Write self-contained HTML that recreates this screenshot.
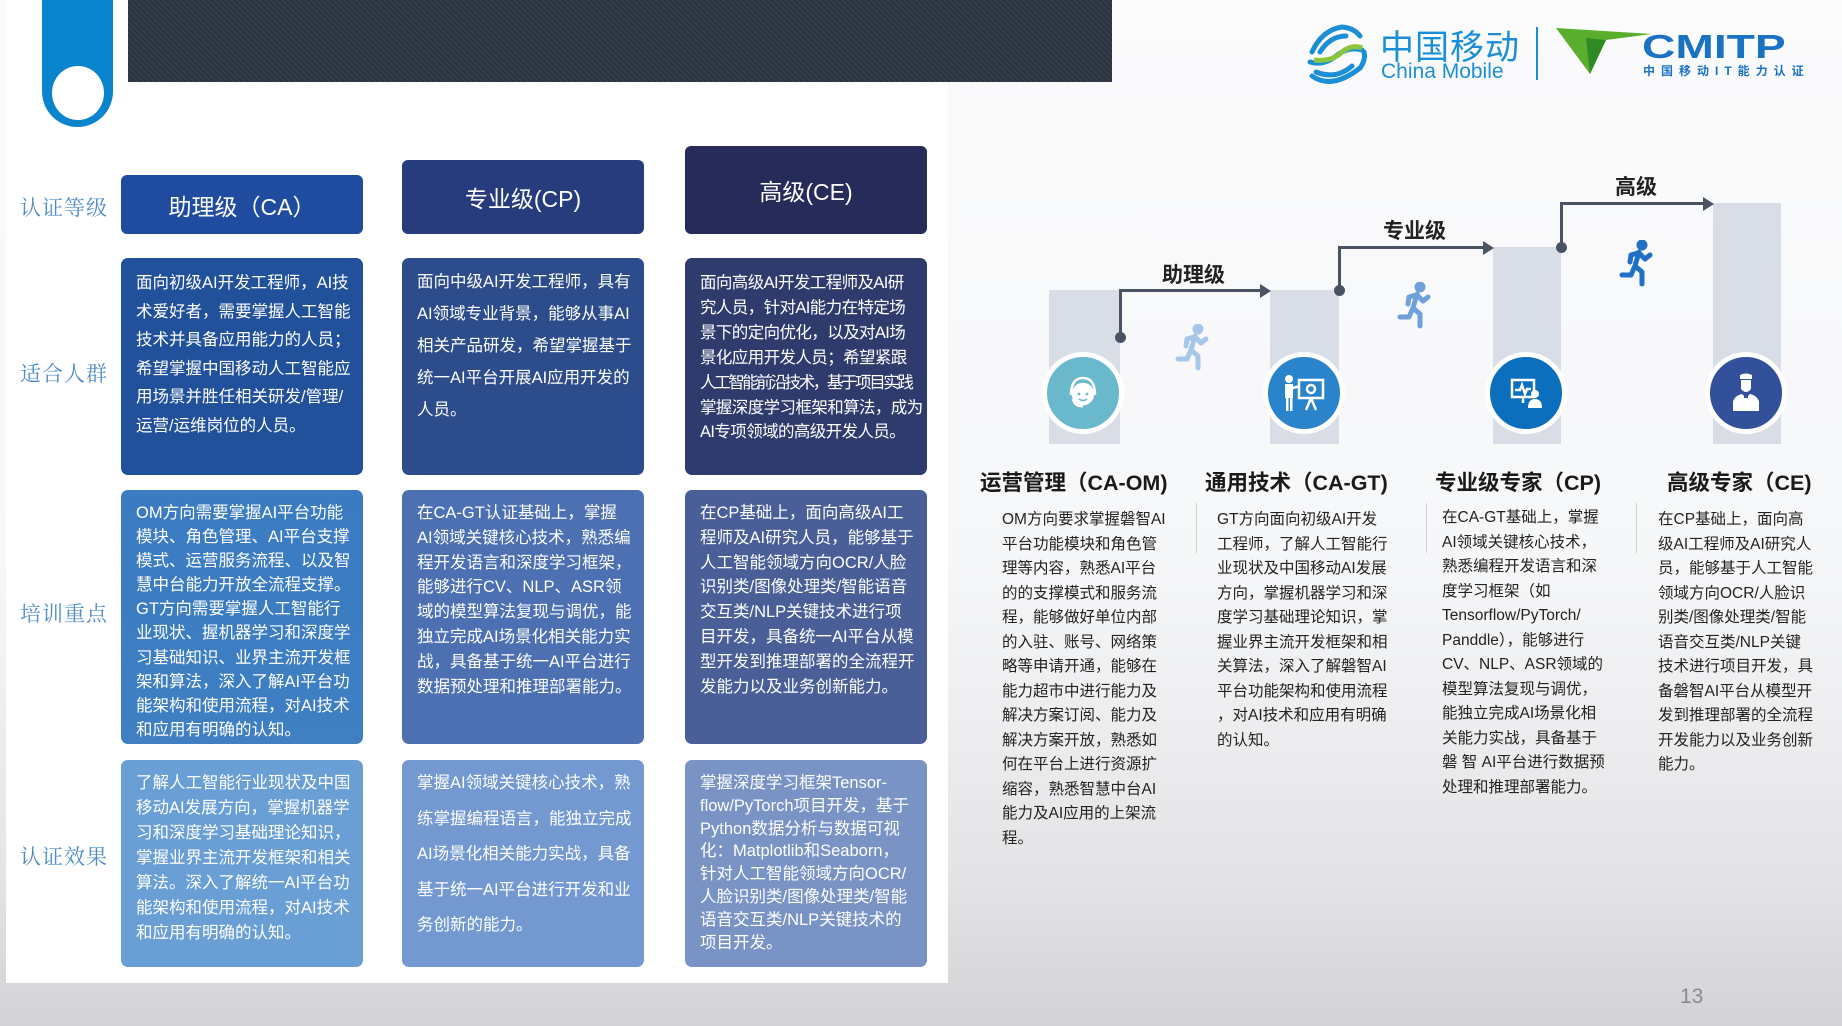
<!DOCTYPE html>
<html><head><meta charset="utf-8">
<style>
*{margin:0;padding:0;box-sizing:border-box}
body{width:1842px;height:1026px;position:relative;overflow:hidden;font-family:"Liberation Sans","Noto Sans CJK SC",sans-serif;background:linear-gradient(180deg,#fbfbfc 0%,#f6f7f9 55%,#e4e4e6 85%,#d3d3d5 100%)}
.a{position:absolute}
.lp{left:6px;top:0;width:942px;height:983px;background:#fff}
.lab{left:20px;font-family:"Liberation Serif","Noto Serif CJK SC",serif;font-size:21px;color:#4d8bcb;letter-spacing:1px}
.box{border-radius:7px;color:#fff;font-size:16.5px;white-space:nowrap;padding-left:15px;overflow:hidden}
.hd{border-radius:6px;color:#fff;font-size:23px;display:flex;align-items:center;justify-content:center}
.c1{left:121px;width:242px}.c2{left:402px;width:242px}.c3{left:685px;width:242px}
.gb{background:#d9dde6}
.circ{width:82px;height:82px;border-radius:50%;border:5px solid #fff;display:flex;align-items:center;justify-content:center}
.tt{font-size:21.5px;font-weight:bold;color:#1a1a1a;white-space:nowrap}
.pt{font-size:15.5px;line-height:24.5px;color:#222;white-space:nowrap}
.step{font-size:21px;font-weight:bold;color:#222}
.ln{background:#4a5364}
</style></head><body>
<div class="a lp"></div>
<div class="a" style="left:42px;top:0;width:71px;height:127px;background:#0a84cd;border-radius:0 0 36px 36px"></div>
<div class="a" style="left:52px;top:66px;width:52px;height:54px;border-radius:50%;background:#fff"></div>
<div class="a" style="left:128px;top:0;width:984px;height:82px;background:repeating-linear-gradient(45deg,#2b3340 0 2px,#353d4b 2px 4px)"></div>

<svg class="a" style="left:1302px;top:22px" width="68" height="66" viewBox="0 0 68 66">
<g fill="none" stroke="#1b8fd6" stroke-width="5" stroke-linecap="round">
<path d="M10 30 Q20 8 40 5 Q52 6 58 14"/><path d="M18 30 Q28 14 44 14"/><path d="M8 40 Q22 44 34 34 Q46 24 60 28"/>
<path d="M14 50 Q34 58 50 44"/><path d="M10 54 Q30 68 58 46 Q64 38 62 30"/></g>
<path d="M12 38 Q30 40 40 30 Q50 22 60 26" fill="none" stroke="#8cc63e" stroke-width="5"/>
</svg>
<div class="a" style="left:1380px;top:20px;font-size:34px;color:#1b8fd6;letter-spacing:1px">中国移动</div>
<div class="a" style="left:1381px;top:60px;font-size:21px;color:#1b8fd6">China Mobile</div>
<div class="a" style="left:1536px;top:27px;width:2px;height:53px;background:#1b8fd6"></div>
<svg class="a" style="left:1556px;top:28px" width="100" height="48" viewBox="0 0 100 48"><polygon points="0,0 96,6 50,12 34,46" fill="#5aae2e"/><polygon points="30,10 50,12 34,46" fill="#2e8a23"/></svg>
<div class="a" style="left:1642px;top:28px;font-size:33px;font-weight:900;color:#1a72c4;transform:scaleX(1.4);transform-origin:left">CMITP</div>
<div class="a" style="left:1643px;top:62px;font-size:12px;color:#1a72c4;letter-spacing:6px;font-weight:bold">中国移动IT能力认证</div>

<div class="a lab" style="top:192px">认证等级</div>
<div class="a lab" style="top:358px">适合人群</div>
<div class="a lab" style="top:598px">培训重点</div>
<div class="a lab" style="top:841px">认证效果</div>

<div class="a hd c1" style="top:175px;height:59px;background:#1f4c9e">助理级（CA）</div>
<div class="a hd c2" style="top:160px;height:74px;background:#273c7c">专业级(CP)</div>
<div class="a hd c3" style="top:146px;height:88px;background:#272b5a">高级(CE)</div>

<div class="a box c1" style="top:258px;height:217px;background:#22519b;line-height:28.5px;padding-top:11px">面向初级AI开发工程师，AI技<br>术爱好者，需要掌握人工智能<br>技术并具备应用能力的人员；<br>希望掌握中国移动人工智能应<br>用场景并胜任相关研发/管理/<br>运营/运维岗位的人员。</div>
<div class="a box c2" style="top:258px;height:217px;background:#2c4c8b;line-height:32px;padding-top:8px">面向中级AI开发工程师，具有<br>AI领域专业背景，能够从事AI<br>相关产品研发，希望掌握基于<br>统一AI平台开展AI应用开发的<br>人员。</div>
<div class="a box c3" style="top:258px;height:217px;background:#2f3b6d;line-height:24.9px;padding-top:13px;letter-spacing:-0.6px">面向高级AI开发工程师及AI研<br>究人员，针对AI能力在特定场<br>景下的定向优化，以及对AI场<br>景化应用开发人员；希望紧跟<br><span style="letter-spacing:-2.4px">人工智能前沿技术，基于项目实践</span><br>掌握深度学习框架和算法，成为<br>AI专项领域的高级开发人员。</div>

<div class="a box c1" style="top:490px;height:254px;background:linear-gradient(#3a7bc2,#3f7fc2);line-height:24.1px;padding-top:11px">OM方向需要掌握AI平台功能<br>模块、角色管理、AI平台支撑<br>模式、运营服务流程、以及智<br>慧中台能力开放全流程支撑。<br>GT方向需要掌握人工智能行<br>业现状、握机器学习和深度学<br>习基础知识、业界主流开发框<br>架和算法，深入了解AI平台功<br>能架构和使用流程，对AI技术<br>和应用有明确的认知。</div>
<div class="a box c2" style="top:490px;height:254px;background:#4c70b1;line-height:24.8px;padding-top:11px">在CA-GT认证基础上，掌握<br>AI领域关键核心技术，熟悉编<br>程开发语言和深度学习框架，<br>能够进行CV、NLP、ASR领<br>域的模型算法复现与调优，能<br>独立完成AI场景化相关能力实<br>战，具备基于统一AI平台进行<br>数据预处理和推理部署能力。</div>
<div class="a box c3" style="top:490px;height:254px;background:#4a5f97;line-height:24.8px;padding-top:11px">在CP基础上，面向高级AI工<br>程师及AI研究人员，能够基于<br>人工智能领域方向OCR/人脸<br>识别类/图像处理类/智能语音<br>交互类/NLP关键技术进行项<br>目开发，具备统一AI平台从模<br>型开发到推理部署的全流程开<br>发能力以及业务创新能力。</div>

<div class="a box c1" style="top:760px;height:207px;background:#699fd4;line-height:25px;padding-top:11px">了解人工智能行业现状及中国<br>移动AI发展方向，掌握机器学<br>习和深度学习基础理论知识，<br>掌握业界主流开发框架和相关<br>算法。深入了解统一AI平台功<br>能架构和使用流程，对AI技术<br>和应用有明确的认知。</div>
<div class="a box c2" style="top:760px;height:207px;background:#7399d0;line-height:35.6px;padding-top:6px">掌握AI领域关键核心技术，熟<br>练掌握编程语言，能独立完成<br>AI场景化相关能力实战，具备<br>基于统一AI平台进行开发和业<br>务创新的能力。</div>
<div class="a box c3" style="top:760px;height:207px;background:#7993c4;line-height:22.8px;padding-top:12px">掌握深度学习框架Tensor-<br>flow/PyTorch项目开发，基于<br>Python数据分析与数据可视<br>化：Matplotlib和Seaborn，<br>针对人工智能领域方向OCR/<br>人脸识别类/图像处理类/智能<br>语音交互类/NLP关键技术的<br>项目开发。</div>

<div class="a gb" style="left:1049px;top:290px;width:71px;height:154px"></div>
<div class="a gb" style="left:1270px;top:290px;width:69px;height:154px"></div>
<div class="a gb" style="left:1493px;top:247px;width:68px;height:197px"></div>
<div class="a gb" style="left:1713px;top:203px;width:68px;height:241px"></div>

<div class="a ln" style="left:1119px;top:290px;width:3px;height:47px"></div>
<div class="a ln" style="left:1119px;top:289px;width:144px;height:3px"></div>
<div class="a" style="left:1260px;top:284px;border-left:11px solid #4a5364;border-top:7px solid transparent;border-bottom:7px solid transparent"></div>
<div class="a ln" style="left:1115px;top:332px;width:11px;height:11px;border-radius:50%"></div>

<div class="a ln" style="left:1338px;top:247px;width:3px;height:43px"></div>
<div class="a ln" style="left:1338px;top:246px;width:148px;height:3px"></div>
<div class="a" style="left:1483px;top:241px;border-left:11px solid #4a5364;border-top:7px solid transparent;border-bottom:7px solid transparent"></div>
<div class="a ln" style="left:1334px;top:285px;width:11px;height:11px;border-radius:50%"></div>

<div class="a ln" style="left:1560px;top:203px;width:3px;height:44px"></div>
<div class="a ln" style="left:1560px;top:202px;width:146px;height:3px"></div>
<div class="a" style="left:1703px;top:197px;border-left:11px solid #4a5364;border-top:7px solid transparent;border-bottom:7px solid transparent"></div>
<div class="a ln" style="left:1556px;top:242px;width:11px;height:11px;border-radius:50%"></div>

<div class="a step" style="left:1162px;top:259px">助理级</div>
<div class="a step" style="left:1383px;top:215px">专业级</div>
<div class="a step" style="left:1615px;top:171px">高级</div>

<svg class="a" style="left:1174px;top:324px" width="40" height="48" viewBox="0 0 40 48"><g fill="none" stroke="#a7c7ea" stroke-width="5" stroke-linecap="round" stroke-linejoin="round"><circle cx="24" cy="5" r="3" fill="#a7c7ea"/><path d="M21 12 L17 26 M20 13 L13 15 L12 22 M21 13 L27 19 L32 15 M17 26 L24 32 L24 44 M17 26 L13 35 L4 35"/></g></svg>
<svg class="a" style="left:1396px;top:282px" width="40" height="48" viewBox="0 0 40 48"><g fill="none" stroke="#6fa0da" stroke-width="5" stroke-linecap="round" stroke-linejoin="round"><circle cx="24" cy="5" r="3" fill="#6fa0da"/><path d="M21 12 L17 26 M20 13 L13 15 L12 22 M21 13 L27 19 L32 15 M17 26 L24 32 L24 44 M17 26 L13 35 L4 35"/></g></svg>
<svg class="a" style="left:1618px;top:240px" width="40" height="48" viewBox="0 0 40 48"><g fill="none" stroke="#1f70c6" stroke-width="5" stroke-linecap="round" stroke-linejoin="round"><circle cx="24" cy="5" r="3" fill="#1f70c6"/><path d="M21 12 L17 26 M20 13 L13 15 L12 22 M21 13 L27 19 L32 15 M17 26 L24 32 L24 44 M17 26 L13 35 L4 35"/></g></svg>

<div class="a circ" style="left:1042px;top:352px;background:#6ab8cb">
<svg width="34" height="36" viewBox="0 0 34 36"><g fill="none" stroke="#fff" stroke-width="2.5"><path d="M5 20 Q5 3 17 3 Q29 3 29 20"/><circle cx="17" cy="19" r="10" fill="#fff"/><path d="M7 24 Q9 32 17 31"/></g><circle cx="13" cy="19" r="1.4" fill="#6ab8cb"/><circle cx="21" cy="19" r="1.4" fill="#6ab8cb"/><path d="M13 24 Q17 27 21 24" stroke="#6ab8cb" stroke-width="1.5" fill="none"/></svg></div>
<div class="a circ" style="left:1263px;top:352px;background:#2a84cc">
<svg width="44" height="38" viewBox="0 0 44 38"><g fill="#fff"><circle cx="7" cy="5" r="4"/><rect x="3" y="10" width="8" height="14"/><rect x="4" y="24" width="2.5" height="13"/><rect x="8" y="24" width="2.5" height="13"/></g><g fill="none" stroke="#fff" stroke-width="2.5"><rect x="17" y="6" width="24" height="18"/><circle cx="29" cy="15" r="4"/><path d="M29 24 L24 36 M29 24 L34 36 M11 14 L18 12"/></g></svg></div>
<div class="a circ" style="left:1485px;top:352px;background:#0b6fbe">
<svg width="34" height="32" viewBox="0 0 34 32"><g fill="none" stroke="#fff" stroke-width="2.5"><rect x="3" y="3" width="22" height="17"/><path d="M6 13 L11 13 L13 8 L16 17 L18 12 L22 12"/><path d="M14 20 L14 26"/></g><circle cx="26" cy="17" r="4" fill="#fff"/><path d="M19 31 Q19 22 26 22 Q33 22 33 31 Z" fill="#fff"/></svg></div>
<div class="a circ" style="left:1705px;top:352px;background:#32519a">
<svg width="30" height="40" viewBox="0 0 30 40"><g fill="#fff"><path d="M9 2 Q15 -1 21 2 L21 6 L9 6 Z"/><path d="M10 7 L20 7 L20 16 Q15 22 10 16 Z"/><path d="M2 38 L2 28 Q5 22 11 21 L15 25 L19 21 Q25 22 28 28 L28 38 Z"/></g><path d="M13 24 L17 24" stroke="#32519a" stroke-width="2"/></svg></div>

<div class="a tt" style="left:980px;top:466px">运营管理（CA-OM)</div>
<div class="a tt" style="left:1205px;top:466px">通用技术（CA-GT)</div>
<div class="a tt" style="left:1435px;top:466px">专业级专家（CP)</div>
<div class="a tt" style="left:1667px;top:466px">高级专家（CE)</div>

<div class="a" style="left:1196px;top:503px;width:1px;height:50px;background:#d0d0d0"></div>
<div class="a" style="left:1426px;top:503px;width:1px;height:50px;background:#d0d0d0"></div>
<div class="a" style="left:1636px;top:503px;width:1px;height:50px;background:#d0d0d0"></div>

<div class="a pt" style="left:1002px;top:508px">OM方向要求掌握磐智AI<br>平台功能模块和角色管<br>理等内容，熟悉AI平台<br>的的支撑模式和服务流<br>程，能够做好单位内部<br>的入驻、账号、网络策<br>略等申请开通，能够在<br>能力超市中进行能力及<br>解决方案订阅、能力及<br>解决方案开放，熟悉如<br>何在平台上进行资源扩<br>缩容，熟悉智慧中台AI<br>能力及AI应用的上架流<br>程。</div>
<div class="a pt" style="left:1217px;top:508px">GT方向面向初级AI开发<br>工程师，了解人工智能行<br>业现状及中国移动AI发展<br>方向，掌握机器学习和深<br>度学习基础理论知识，掌<br>握业界主流开发框架和相<br>关算法，深入了解磐智AI<br>平台功能架构和使用流程<br>，对AI技术和应用有明确<br>的认知。</div>
<div class="a pt" style="left:1442px;top:506px">在CA-GT基础上，掌握<br>AI领域关键核心技术，<br>熟悉编程开发语言和深<br>度学习框架（如<br>Tensorflow/PyTorch/<br>Panddle），能够进行<br>CV、NLP、ASR领域的<br>模型算法复现与调优，<br>能独立完成AI场景化相<br>关能力实战，具备基于<br>磐 智 AI平台进行数据预<br>处理和推理部署能力。</div>
<div class="a pt" style="left:1658px;top:508px">在CP基础上，面向高<br>级AI工程师及AI研究人<br>员，能够基于人工智能<br>领域方向OCR/人脸识<br>别类/图像处理类/智能<br>语音交互类/NLP关键<br>技术进行项目开发，具<br>备磐智AI平台从模型开<br>发到推理部署的全流程<br>开发能力以及业务创新<br>能力。</div>

<div class="a" style="left:1680px;top:985px;font-size:21px;color:#8a8a8e">13</div>
</body></html>
